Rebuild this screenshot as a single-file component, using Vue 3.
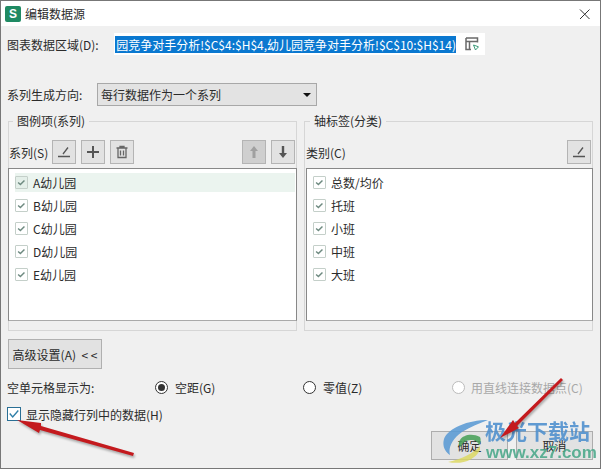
<script setup>
const series = ['A幼儿园', 'B幼儿园', 'C幼儿园', 'D幼儿园', 'E幼儿园']
const cats = ['总数/均价', '托班', '小班', '中班', '大班']
</script>

<template>
  <div class="win">
    <header class="title">
      <span class="logo">S</span>
      <span class="title-text">编辑数据源</span>
      <svg class="close" width="12" height="12" viewBox="0 0 12 12"><path d="M1 1.500L10.500 11M10.500 1.500L1 11" stroke="#333" stroke-width="1" fill="none" /></svg>
    </header>

    <main class="body">
      <div class="range-row">
        <span class="label">图表数据区域(D):</span>
        <div class="range">
          <div class="sel"><span class="sel-text">园竞争对手分析!$C$4:$H$4,幼儿园竞争对手分析!$C$10:$H$14)</span></div>
          <svg class="pick" width="14" height="14" viewBox="0 0 14 14">
            <path d="M1 1H12.500V5.500M1 1V12.500H6M1 4.500H12M4.500 4.500V12.500" fill="none" stroke="#6a6a6a" stroke-width="1.500" />
            <path d="M8.500 8L13.500 9.800L10.500 13Z" fill="none" stroke="#3a9a78" stroke-width="1" />
          </svg>
        </div>
      </div>

      <div class="dir-row">
        <span class="label">系列生成方向:</span>
        <div class="select">
          <span>每行数据作为一个系列</span>
          <i class="caret"></i>
        </div>
      </div>

      <div class="groups">
        <fieldset class="group left">
          <legend>图例项(系列)</legend>
          <div class="tools">
            <span class="tool-label">系列(S)</span>
            <button class="tool">
              <svg width="14" height="12" viewBox="0 0 14 12"><path d="M6 8L11 1.500M1 10.500H13" stroke="#555" stroke-width="1.300" fill="none" /></svg>
            </button>
            <button class="tool">
              <svg width="14" height="14" viewBox="0 0 14 14"><path d="M7 1V13M1 7H13" stroke="#555" stroke-width="2" fill="none" /></svg>
            </button>
            <button class="tool">
              <svg width="14" height="14" viewBox="0 0 14 14"><path d="M1.500 3H12.500M5 3V1.500H9V3M3 3.500V12.500H11V3.500M5.500 5.500V10.500M8.500 5.500V10.500" stroke="#666" stroke-width="1.300" fill="none" /></svg>
            </button>
            <span class="spacer"></span>
            <button class="tool off">
              <svg width="12" height="14" viewBox="0 0 12 14"><path d="M6 1L10 6H7.500V13H4.500V6H2Z" fill="#a0a0a0" /></svg>
            </button>
            <button class="tool">
              <svg width="12" height="14" viewBox="0 0 12 14"><path d="M6 13L10 8H7.200V1H4.800V8H2Z" fill="#555" /></svg>
            </button>
          </div>
          <ul class="list">
            <li v-for="(s, i) in series" :key="s" :class="{ active: i === 0 }">
              <span class="cb">
                <svg width="13" height="13" viewBox="0 0 13 13"><path d="M2.500 6.500L5.200 9L10 4" fill="none" stroke="#6e8a80" stroke-width="1.700" /></svg>
              </span>
              {{ s }}
            </li>
          </ul>
        </fieldset>

        <fieldset class="group right">
          <legend>轴标签(分类)</legend>
          <div class="tools">
            <span class="tool-label">类别(C)</span>
            <span class="spacer"></span>
            <button class="tool">
              <svg width="14" height="12" viewBox="0 0 14 12"><path d="M6 8L11 1.500M1 10.500H13" stroke="#555" stroke-width="1.300" fill="none" /></svg>
            </button>
          </div>
          <ul class="list">
            <li v-for="c in cats" :key="c">
              <span class="cb">
                <svg width="13" height="13" viewBox="0 0 13 13"><path d="M2.500 6.500L5.200 9L10 4" fill="none" stroke="#6e8a80" stroke-width="1.700" /></svg>
              </span>
              {{ c }}
            </li>
          </ul>
        </fieldset>
      </div>

      <button class="advanced">高级设置(A)&nbsp;&nbsp;&lt; &lt;</button>

      <div class="radios">
        <span class="empty-label">空单元格显示为:</span>
        <span class="radio r1"><i class="dot on"></i>空距(G)</span>
        <span class="radio r2"><i class="dot"></i>零值(Z)</span>
        <span class="radio r3"><i class="dot dis"></i>用直线连接数据点(C)</span>
      </div>

      <div class="hidden-row">
        <span class="big-cb">
          <svg width="14" height="14" viewBox="0 0 14 14"><path d="M2 6.500L5.500 10.500L12 3" fill="none" stroke="#2f7fa8" stroke-width="1.600" /></svg>
        </span>
        显示隐藏行列中的数据(H)
      </div>

      <div class="actions">
        <button class="action">确定</button>
        <button class="action">取消</button>
      </div>
    </main>

    <div class="mark">
      <svg class="mark-logo" width="50" height="46" viewBox="0 0 50 46">
        <path d="M46 1C26 1 6 9 2 20C0 27 3 33 8 36C6 29 10 20 20 13C28 8 38 4 46 1Z" fill="#5b9bd5" />
        <path d="M38 18C30 14 21 16 18 21C16 24 17 27 19 28C20 24 24 21 29 21C33 21 36 23 37 26C39 24 39 20 38 18Z" fill="#4aa25a" />
        <path d="M38 27C32 34 20 40 6 43C20 46 33 41 38 31Z" fill="#dcd75a" opacity=".9" />
      </svg>
      <span class="mark-cn">极光下载站</span>
      <span class="mark-url">www.xz7.com</span>
    </div>

    <svg class="arrows" width="601" height="469" viewBox="0 0 601 469">
      <g fill="#c41a1e">
        <path d="M17 420L41 423L41 426L134 453L133 456L40 430L39 433Z" />
        <path d="M500 438L513 420L515 423L561 378L563 380L517 426L519 428Z" />
      </g>
    </svg>
  </div>
</template>

<style>
html, body { margin: 0; }
</style>

<style scoped>
* { box-sizing: border-box; }
.win {
  position: relative;
  width: 601px;
  height: 469px;
  overflow: hidden;
  background: #f0f0f0;
  border: 1px solid #777;
  font-family: "Noto Sans CJK SC", "Liberation Sans", sans-serif;
  font-size: 12px;
  color: #2b2b2b;
}
.title {
  height: 25px;
  background: #fff;
  display: flex;
  align-items: center;
  padding: 0 0 0 4px;
}
.logo {
  width: 16px;
  height: 16px;
  border-radius: 2px;
  background: #1f8a63;
  color: #fff;
  font: bold 12px/16px "Liberation Sans", sans-serif;
  text-align: center;
}
.title-text { margin-left: 4px; font-size: 12px; }
.close { margin-left: auto; margin-right: 9px; }
.body { padding: 0 7px 0 6px; }
.range-row {
  display: flex;
  align-items: center;
  height: 22px;
  margin-top: 7px;
}
.label { width: 107px; flex: none; }
.range {
  width: 371px;
  height: 22px;
  background: #fff;
  display: flex;
  align-items: center;
  padding-left: 1px;
  flex: none;
}
.sel {
  width: 341px;
  height: 17px;
  background: #0a78d0;
  color: #fff;
  overflow: hidden;
  display: flex;
  justify-content: flex-end;
  white-space: nowrap;
  line-height: 17px;
}
.sel-text { flex: none; }
.pick { margin-left: 9px; }
.dir-row {
  display: flex;
  align-items: center;
  margin-top: 28px;
  height: 23px;
}
.dir-row .label { width: 90px; }
.select {
  width: 220px;
  height: 23px;
  background: #e3e3e3;
  border: 1px solid #a8a8a8;
  display: flex;
  align-items: center;
  justify-content: space-between;
  padding: 0 5px 0 3px;
}
.caret {
  width: 0;
  height: 0;
  border-left: 4px solid transparent;
  border-right: 4px solid transparent;
  border-top: 4px solid #111;
}
.groups {
  display: flex;
  margin-top: 7px;
  gap: 7px;
}
.group {
  margin: 0;
  padding: 0;
  height: 218px;
  border: 1px solid #d6d6d6;
  min-width: 0;
  display: block;
}
.group legend {
  margin-left: 4px;
  padding: 0 4px;
  font-size: 12px;
  line-height: 16px;
}
.right legend { margin-left: 5px; }
.left { width: 290px; margin-left: 1px; }
.right { width: 290px; }
.tools {
  display: flex;
  align-items: center;
  height: 24px;
  margin-top: 11px;
  padding-left: 0;
  gap: 5px;
  padding-right: 1px;
}
.right .tools { padding-left: 1px; }
.tool-label { width: 38px; flex: none; white-space: nowrap; }
.spacer { flex: 1; }
.tool {
  width: 24px;
  height: 24px;
  padding: 0;
  border: 1px solid #b4b4b4;
  background: #e2e2e2;
  display: flex;
  align-items: center;
  justify-content: center;
}
.tool.off { background: #cfcfcf; }
.list {
  list-style: none;
  margin: 4px 0 0 -1px;
  padding: 4px 1px 0 0;
  height: 153px;
  width: 289px;
  background: #fff;
  border: 1px solid #888;
  border-bottom-color: #aaa;
}
.right .list { margin-left: 1px; width: 287px; }
.list li {
  height: 19px;
  margin: 0 0 4px 6px;
  display: flex;
  align-items: center;
  gap: 5px;
}
.list li.active { background: #ebf4ef; }
.cb {
  width: 13px;
  height: 13px;
  border: 1px solid #c4cfc9;
  background: #fff;
  border-radius: 1px;
  display: flex;
  align-items: center;
  justify-content: center;
  flex: none;
}
.list li.active .cb { background: #e4efe9; }
.advanced {
  display: block;
  width: 94px;
  height: 30px;
  margin: 8px 0 0 1px;
  padding: 0;
  border: 1px solid #b0b0b0;
  background: #e2e2e2;
  font: inherit;
  color: inherit;
}
.radios {
  display: flex;
  align-items: center;
  height: 20px;
  margin-top: 8px;
}
.empty-label { width: 148px; flex: none; }
.radio { display: flex; align-items: center; gap: 7px; flex: none; }
.r1 { width: 148px; }
.r2 { width: 149px; gap: 7px; }
.r3 { color: #a8a8a8; gap: 6px; }
.dot {
  width: 13px;
  height: 13px;
  border-radius: 50%;
  border: 1px solid #333;
  background: #fff;
  position: relative;
  flex: none;
}
.dot.on::after {
  content: "";
  position: absolute;
  inset: 2px;
  border-radius: 50%;
  background: #333;
}
.dot.dis { border-color: #bbb; }
.hidden-row {
  display: flex;
  align-items: center;
  gap: 5px;
  margin-top: 7px;
  height: 20px;
}
.big-cb {
  width: 14px;
  height: 14px;
  border: 1px solid #2a6f95;
  background: #fff;
  flex: none;
  display: flex;
  align-items: center;
  justify-content: center;
}
.actions {
  display: flex;
  justify-content: flex-end;
  gap: 8px;
  margin-top: 7px;
}
.action {
  width: 77px;
  height: 29px;
  padding: 0;
  border: 1px solid #adadad;
  background: #e2e2e2;
  font: inherit;
  color: inherit;
}
.mark {
  position: absolute;
  left: 441px;
  top: 418px;
  width: 159px;
  height: 50px;
  pointer-events: none;
  opacity: .88;
}
.mark-logo { position: absolute; left: 0; top: 0; }
.mark-cn {
  position: absolute;
  left: 43px;
  top: 0;
  font-size: 21px;
  line-height: 22px;
  font-weight: 700;
  color: #4d8fce;
  white-space: nowrap;
}
.mark-url {
  position: absolute;
  left: 44px;
  top: 24px;
  font: 700 17px/20px "Liberation Sans", sans-serif;
  color: #4aa88a;
  white-space: nowrap;
}
.arrows {
  position: absolute;
  left: -1px;
  top: -1px;
  pointer-events: none;
  filter: drop-shadow(1px 2px 1px rgba(0, 0, 0, .3));
}
</style>
